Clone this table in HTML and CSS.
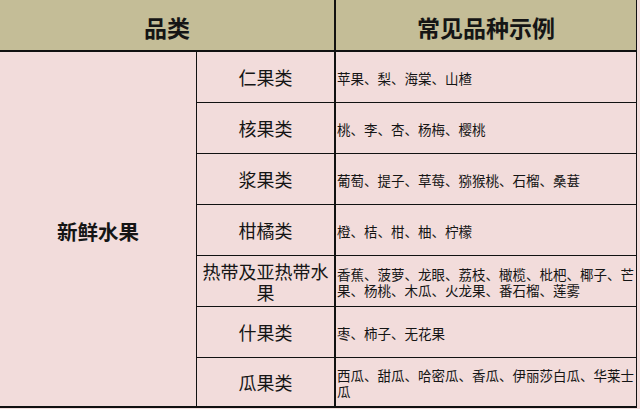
FILE: index.html
```html
<!DOCTYPE html>
<html lang="zh-CN">
<head>
<meta charset="utf-8">
<title>新鲜水果品类</title>
<link rel="stylesheet" href="styles.css">
</head>
<body>
<div class="sheet">
  <div class="cell head span2">品类</div>
  <div class="cell head last">常见品种示例</div>

  <div class="cell cat">新鲜水果</div>

  <div class="cell sub">仁果类</div>
  <div class="cell ex">苹果、梨、海棠、山楂</div>

  <div class="cell sub">核果类</div>
  <div class="cell ex">桃、李、杏、杨梅、樱桃</div>

  <div class="cell sub">浆果类</div>
  <div class="cell ex">葡萄、提子、草莓、猕猴桃、石榴、桑葚</div>

  <div class="cell sub">柑橘类</div>
  <div class="cell ex">橙、桔、柑、柚、柠檬</div>

  <div class="cell sub">热带及亚热带水果</div>
  <div class="cell ex">香蕉、菠萝、龙眼、荔枝、橄榄、枇杷、椰子、芒果、杨桃、木瓜、火龙果、番石榴、莲雾</div>

  <div class="cell sub">什果类</div>
  <div class="cell ex">枣、柿子、无花果</div>

  <div class="cell sub bottom">瓜果类</div>
  <div class="cell ex bottom">西瓜、甜瓜、哈密瓜、香瓜、伊丽莎白瓜、华莱士瓜</div>
</div>
</body>
</html>
```

FILE: styles.css
```css
html, body {
  margin: 0;
  padding: 0;
  background: #f2dcdb;
}

body {
  width: 640px;
  height: 409px;
  overflow: hidden;
  font-family: "Noto Sans CJK SC", "Noto Sans", sans-serif;
  color: #151515;
}

.sheet {
  display: grid;
  width: 637px;
  grid-template-columns: 197px 139px 301px;
  grid-template-rows: 52px repeat(6, 51px) 50px;
}

.cell {
  box-sizing: border-box;
  display: flex;
  align-items: center;
  border-right: 1px solid #111;
  border-bottom: 1px solid #111;
}

.head {
  background: #c4bd97;
  justify-content: center;
  font-size: 23px;
  font-weight: 700;
  line-height: 24px;
  padding-top: 3px;
  border-bottom: 2px solid #111;
  border-right: 2px solid #111;
}

.head.span2 {
  grid-column: 1 / span 2;
}

.head.last {
  border-right: 1px solid #111;
}

.cat {
  grid-column: 1;
  grid-row: 2 / span 7;
  justify-content: center;
  font-size: 20.5px;
  font-weight: 700;
  border-bottom: 2px solid #111;
  padding-top: 4px;
}

.sub {
  grid-column: 2;
  justify-content: center;
  text-align: center;
  font-size: 18px;
  line-height: 21px;
  border-right: 2px solid #111;
  padding: 1px 0 0;
}

.ex {
  grid-column: 3;
  font-size: 13.5px;
  line-height: 16px;
  padding: 2px 0 0 1px;
}

.bottom {
  border-bottom: 2px solid #111;
}
```
